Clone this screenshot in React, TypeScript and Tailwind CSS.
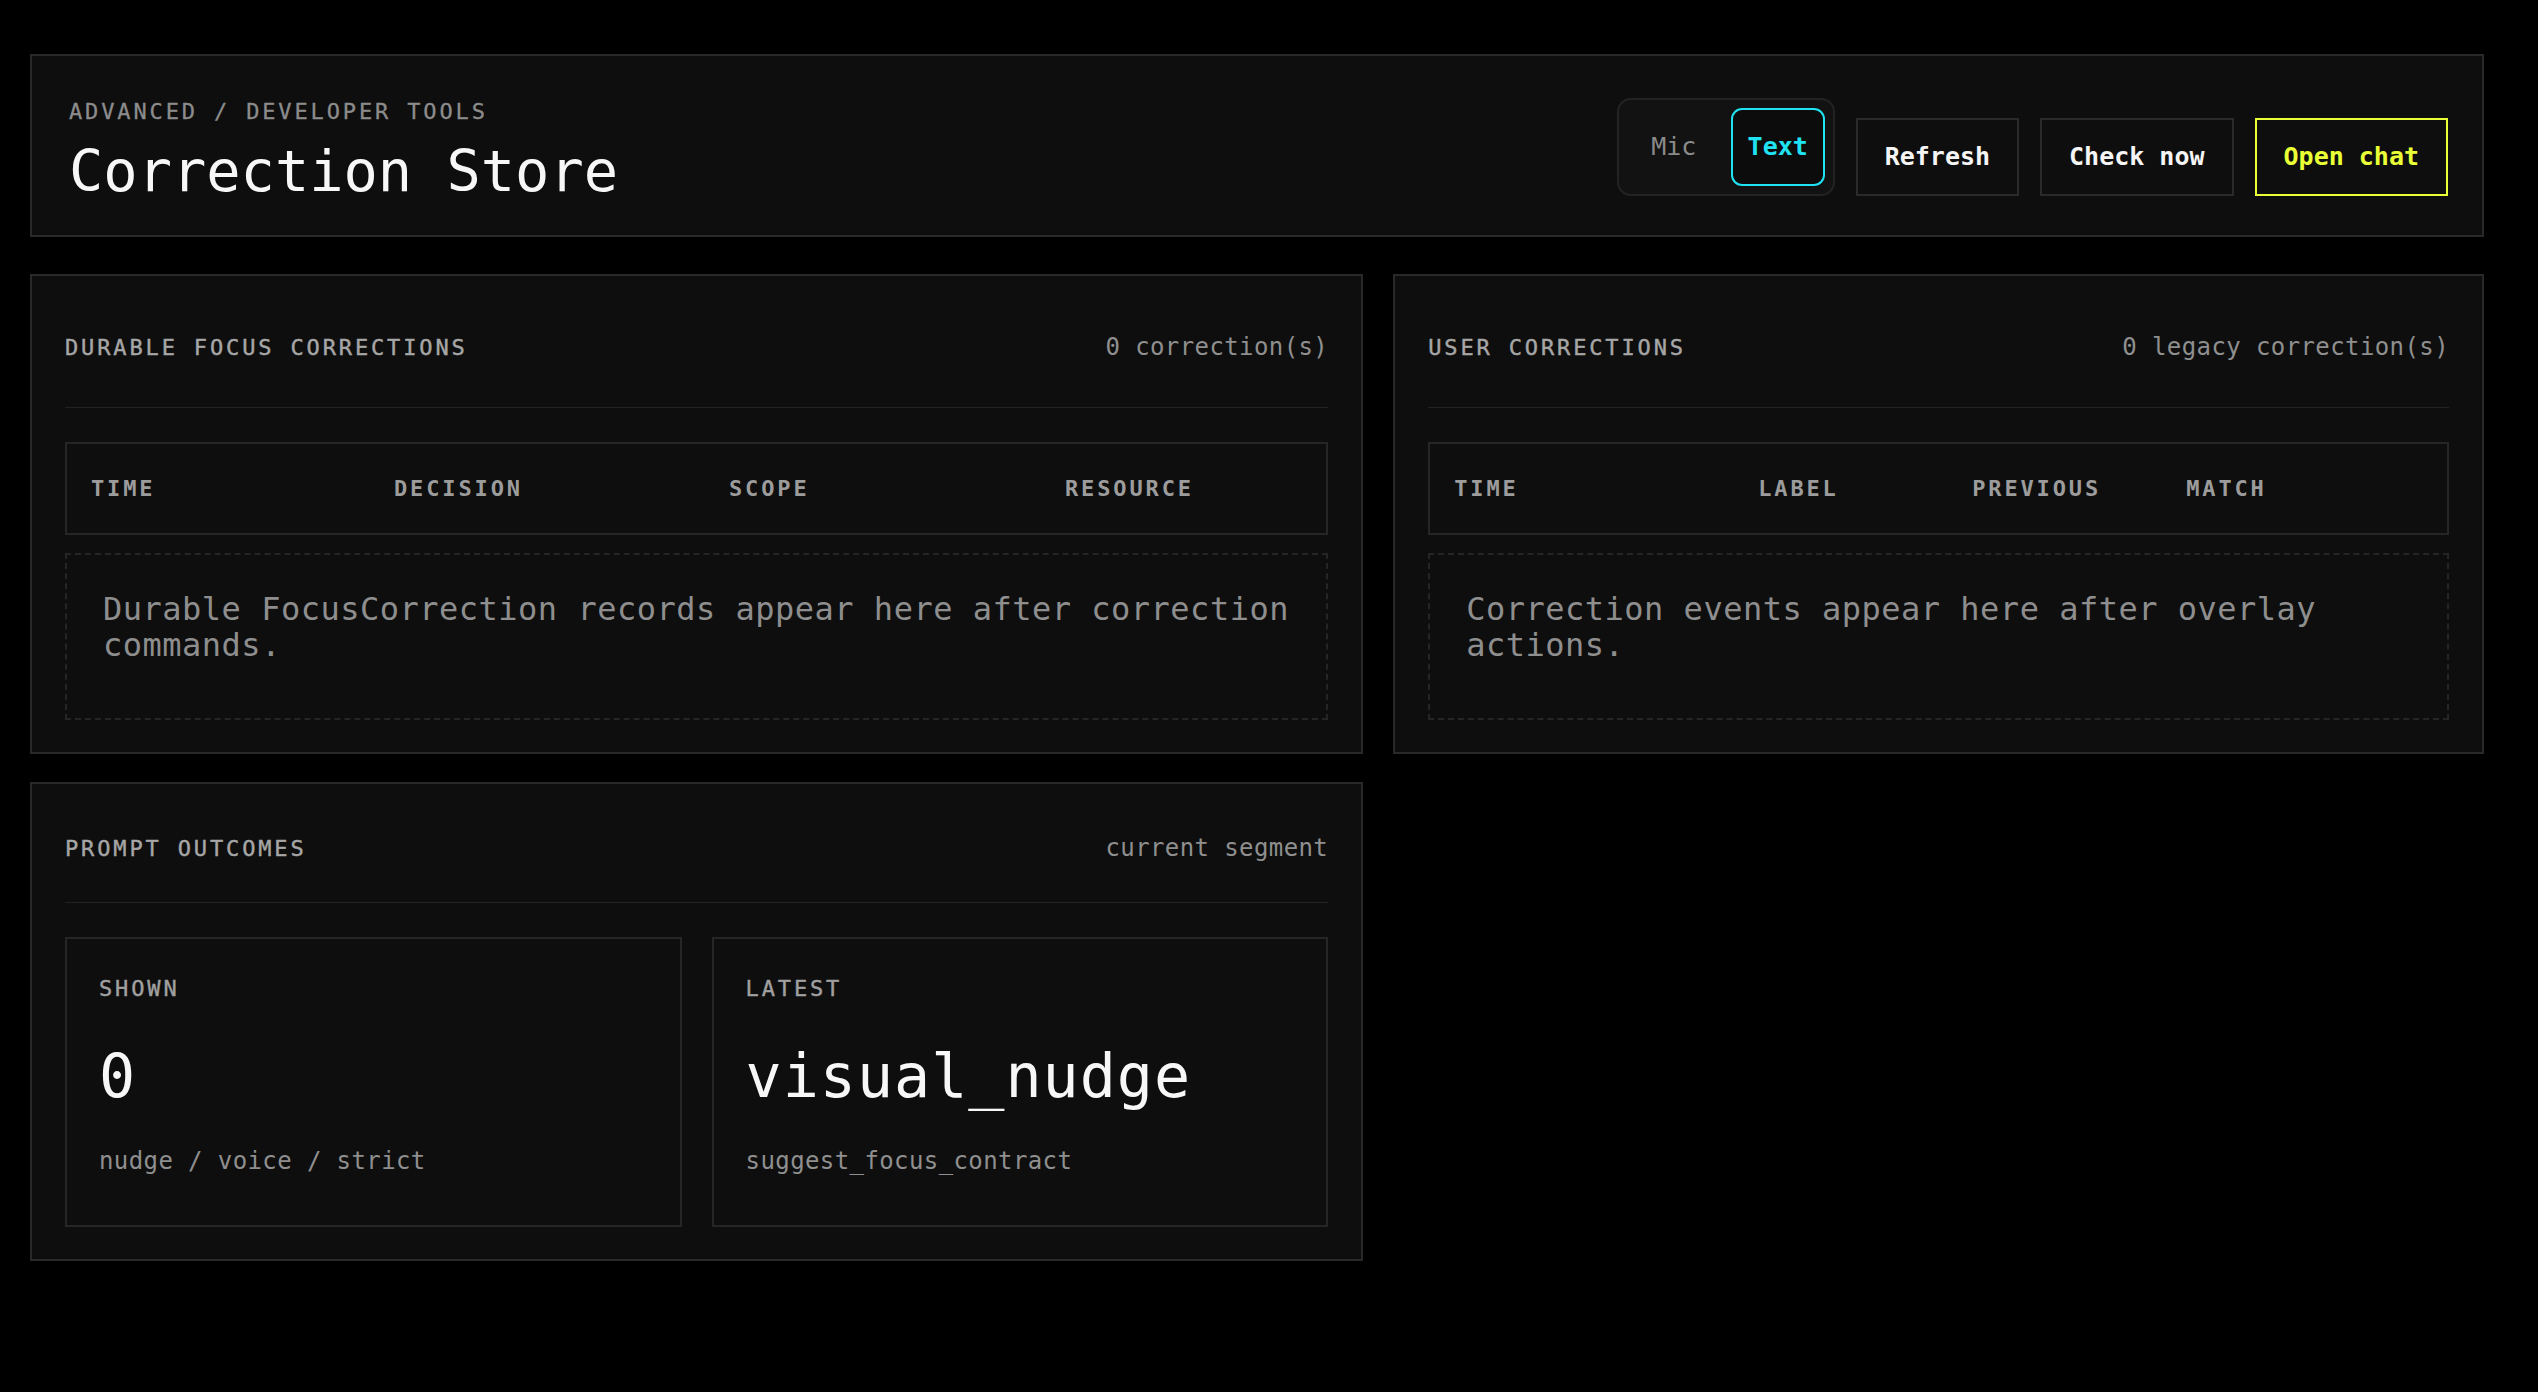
import { useState } from "react";

interface Column {
  label: string;
}

interface TablePanelProps {
  title: string;
  meta: string;
  columns: Column[];
  gridCols: string;
  empty: string;
}

function TablePanel({ title, meta, columns, gridCols, empty }: TablePanelProps) {
  return (
    <section className="border-2 border-[#292929] bg-[#0e0e0e] px-[33px] pt-[32px] pb-[32px]">
      <div className="flex h-[100px] items-baseline justify-between border-b border-[#222222] pt-[25px]">
        <h2 className="text-[22px] leading-[26px] font-normal tracking-[0.13em] text-[#a6a6a6] uppercase [-webkit-text-stroke:0.4px_#a6a6a6]">
          {title}
        </h2>
        <span className="text-[24px] leading-[28px] tracking-[0.4px] text-[#8f8f8f]">{meta}</span>
      </div>
      <div className={`mt-[34px] grid h-[93px] items-center border-2 border-[#262626] pl-[24px] ${gridCols}`}>
        {columns.map((c) => (
          <span
            key={c.label}
            className="text-[22px] leading-[26px] font-bold tracking-[0.13em] text-[#9c9c9c] uppercase"
          >
            {c.label}
          </span>
        ))}
      </div>
      <div className="mt-[18px] h-[167px] border-2 border-dashed border-[#252525] pt-[36px] pr-[16px] pl-[36px]">
        <p className="text-[32px] leading-[36px] tracking-[0.5px] text-[#8e8e8e]">{empty}</p>
      </div>
    </section>
  );
}

function StatCard({ label, value, note }: { label: string; value: string; note: string }) {
  return (
    <div className="border-2 border-[#262626] bg-[#0e0e0e] px-[32px] pt-[37px] pb-[50px]">
      <div className="text-[22px] leading-[26px] font-normal tracking-[0.13em] text-[#a0a0a0] uppercase [-webkit-text-stroke:0.4px_#a0a0a0]">
        {label}
      </div>
      <div className="mt-[44px] text-[60px] leading-[60px] tracking-[1px] text-[#f7f7f7]">{value}</div>
      <div className="mt-[41px] text-[24px] leading-[28px] tracking-[0.4px] text-[#8f8f8f]">{note}</div>
    </div>
  );
}

export default function App() {
  const [mode, setMode] = useState<"mic" | "text">("text");

  return (
    <div className="min-h-screen bg-black px-[30px] pt-[54px] pb-[60px] font-['DejaVu_Sans_Mono',monospace]">
      <div className="w-[2454px]">
        <header className="flex items-end justify-between border-2 border-[#292929] bg-[#0e0e0e] pt-[42px] pr-[34px] pb-[35px] pl-[37px]">
          <div>
            <div className="text-[22px] leading-[26px] font-normal tracking-[0.13em] text-[#8c8c8c] uppercase [-webkit-text-stroke:0.3px_#8c8c8c]">
              Advanced / Developer tools
            </div>
            <h1 className="mt-[17px] text-[57px] leading-[58px] font-normal text-[#f7f7f7]">Correction Store</h1>
          </div>
          <div className="mb-[4px] flex items-end gap-[21px]">
            <div className="flex gap-[10px] rounded-[14px] border-2 border-[#232323] bg-[#121212] p-[8px]">
              <button
                type="button"
                onClick={() => setMode("mic")}
                className={`h-[78px] w-[94px] rounded-[11px] text-[25px] ${
                  mode === "mic"
                    ? "border-2 border-[#1fe3f2] bg-[#0c0c0c] font-semibold text-[#1fe3f2]"
                    : "text-[#8a8a8a]"
                }`}
              >
                Mic
              </button>
              <button
                type="button"
                onClick={() => setMode("text")}
                className={`h-[78px] w-[94px] rounded-[11px] text-[25px] ${
                  mode === "text"
                    ? "border-2 border-[#1fe3f2] bg-[#0c0c0c] font-semibold text-[#1fe3f2]"
                    : "text-[#8a8a8a]"
                }`}
              >
                Text
              </button>
            </div>
            <button
              type="button"
              className="h-[78px] border-2 border-[#2a2a2a] bg-[#0e0e0e] px-[27px] text-[25px] font-semibold text-[#f5f5f5]"
            >
              Refresh
            </button>
            <button
              type="button"
              className="h-[78px] border-2 border-[#2a2a2a] bg-[#0e0e0e] px-[27px] text-[25px] font-semibold text-[#f5f5f5]"
            >
              Check now
            </button>
            <button
              type="button"
              className="h-[78px] border-2 border-[#e9ff36] bg-[#0e0e0e] px-[27px] text-[25px] font-semibold text-[#e9ff36]"
            >
              Open chat
            </button>
          </div>
        </header>

        <div className="mt-[37px] grid grid-cols-[11fr_9fr] items-start gap-x-[30px] gap-y-[28px]">
          <TablePanel
            title="Durable focus corrections"
            meta="0 correction(s)"
            columns={[{ label: "Time" }, { label: "Decision" }, { label: "Scope" }, { label: "Resource" }]}
            gridCols="grid-cols-[303px_335px_336px_1fr]"
            empty="Durable FocusCorrection records appear here after correction commands."
          />
          <TablePanel
            title="User corrections"
            meta="0 legacy correction(s)"
            columns={[{ label: "Time" }, { label: "Label" }, { label: "Previous" }, { label: "Match" }]}
            gridCols="grid-cols-[304px_214px_214px_1fr]"
            empty="Correction events appear here after overlay actions."
          />

          <section className="border-2 border-[#292929] bg-[#0e0e0e] px-[33px] pt-[32px] pb-[32px]">
            <div className="flex h-[87px] items-baseline justify-between border-b border-[#222222] pt-[18px]">
              <h2 className="text-[22px] leading-[26px] font-normal tracking-[0.13em] text-[#a6a6a6] uppercase [-webkit-text-stroke:0.4px_#a6a6a6]">
                Prompt outcomes
              </h2>
              <span className="text-[24px] leading-[28px] tracking-[0.4px] text-[#8f8f8f]">current segment</span>
            </div>
            <div className="mt-[34px] grid grid-cols-2 gap-[30px]">
              <StatCard label="Shown" value="0" note="nudge / voice / strict" />
              <StatCard label="Latest" value="visual_nudge" note="suggest_focus_contract" />
            </div>
          </section>
        </div>
      </div>
    </div>
  );
}
